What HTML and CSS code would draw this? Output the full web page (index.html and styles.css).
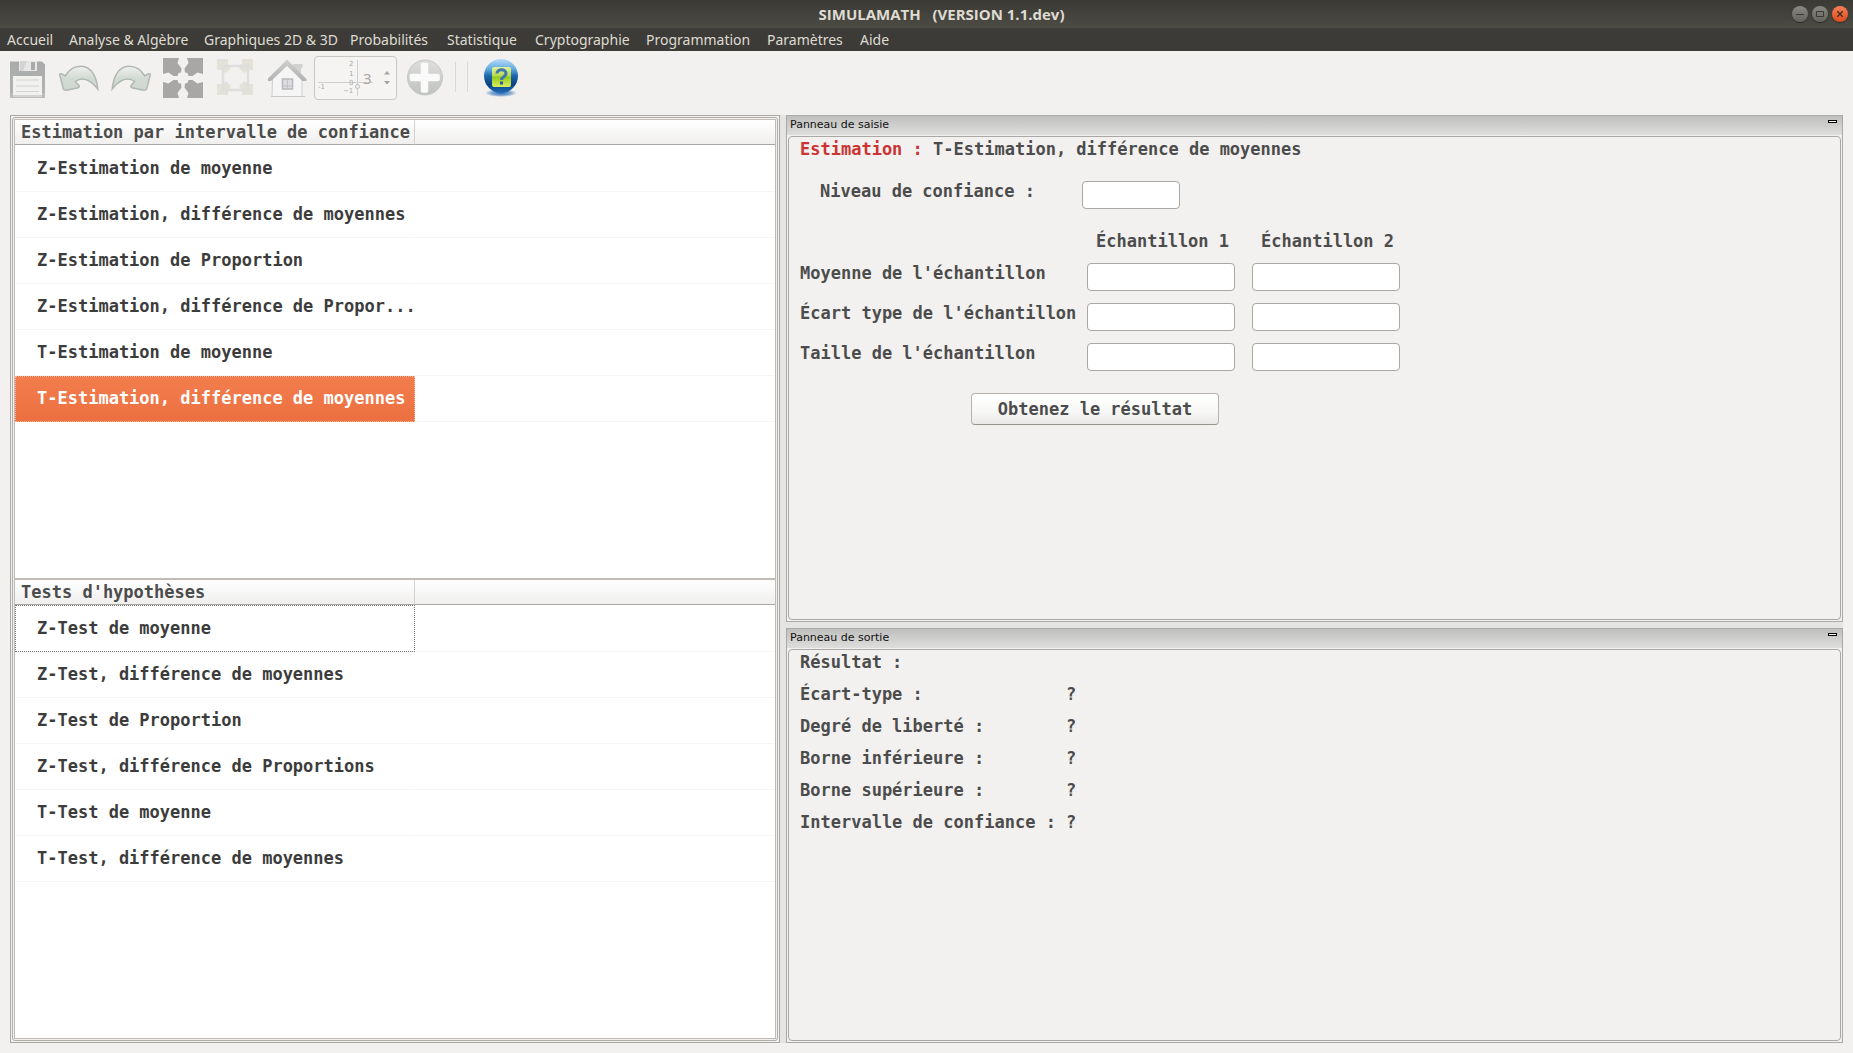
FILE: index.html
```html
<!DOCTYPE html>
<html lang="fr">
<head>
<meta charset="utf-8">
<title>SIMULAMATH (VERSION 1.1.dev)</title>
<link rel="stylesheet" href="styles.css">
</head>
<body>
<header class="titlebar">
  <h1 class="titlebar-text">SIMULAMATH &nbsp; (VERSION 1.1.dev)</h1>
  <div class="window-buttons">
    <button class="wbtn" aria-label="Réduire"><svg viewBox="0 0 16 16"><path d="M4 8.5h8" stroke="#3a3935" fill="none"/></svg></button>
    <button class="wbtn" aria-label="Agrandir"><svg viewBox="0 0 16 16"><path d="M4.5 5.500h7v5h-7z" stroke="#3a3935" fill="none"/></svg></button>
    <button class="wbtn wbtn-close" aria-label="Fermer"><svg viewBox="0 0 16 16"><path d="M5.300 5.300l5.400 5.400M10.700 5.300l-5.400 5.400" stroke="#3a2a20" stroke-width="1.300" fill="none"/></svg></button>
  </div>
</header>
<nav class="menubar">
  <a href="#">Accueil</a>
  <a href="#">Analyse &amp; Algèbre</a>
  <a href="#">Graphiques 2D &amp; 3D</a>
  <a href="#">Probabilités</a>
  <a href="#">Statistique</a>
  <a href="#">Cryptographie</a>
  <a href="#">Programmation</a>
  <a href="#">Paramètres</a>
  <a href="#">Aide</a>
</nav>
<div class="toolbar">
  <svg width="0" height="0" class="defs" aria-hidden="true">
    <defs>
      <linearGradient id="leaf" x1="0" y1="0" x2="0" y2="1"><stop offset="0" stop-color="#f0f1f0"/><stop offset=".5" stop-color="#d3dad3"/><stop offset="1" stop-color="#d0d7d0"/></linearGradient>
      <linearGradient id="steel" x1="0" y1="0" x2="0" y2="1"><stop offset="0" stop-color="#a9abab"/><stop offset="1" stop-color="#b4b4b4"/></linearGradient>
      <linearGradient id="disc" x1="0" y1="0" x2="0" y2="1"><stop offset="0" stop-color="#dededd"/><stop offset="1" stop-color="#bfc2bf"/></linearGradient>
      <linearGradient id="roof" x1="0" y1="0" x2="0" y2="1"><stop offset="0" stop-color="#cfcfcf"/><stop offset="1" stop-color="#b2b2b2"/></linearGradient>
      <linearGradient id="ball" x1="0" y1="0" x2="0" y2="1"><stop offset="0" stop-color="#b9dcf6"/><stop offset=".3" stop-color="#5fa9e0"/><stop offset=".5" stop-color="#1c66ab"/><stop offset=".75" stop-color="#0b4283"/><stop offset="1" stop-color="#1e6cb8"/></linearGradient>
      <linearGradient id="lime" x1="0" y1="0" x2="0" y2="1"><stop offset="0" stop-color="#e3f0a0"/><stop offset=".45" stop-color="#b5da50"/><stop offset=".5" stop-color="#93cb1c"/><stop offset="1" stop-color="#dbec62"/></linearGradient>
      <radialGradient id="glow"><stop offset="0" stop-color="#2d6cb0"/><stop offset=".6" stop-color="#7fa6cf"/><stop offset="1" stop-color="#7fa6cf" stop-opacity="0"/></radialGradient>
      <path id="curl" d="M.8 10l3.400 13.500c.7 1.600 2.500 2.100 4.500 1.400l10.500-2.200c1.200-.6 1.200-1.500.5-2.400l-3.400-3.800c6.500-4.500 14-3 22.500 7.500C37.500 12 32.500 1.500 22.500 1.200 15.500 1 10 4.500 6.200 11L2.500 8.800C1.200 8.600.6 9 .8 10z"/>
      <path id="corner" d="M0 0h16l-1.500 5 4 5.500-.5 4-2.500.5L14.500 18h-4l-5-3.500L0 16z"/>
    </defs>
  </svg>
  <button class="tool" aria-label="Enregistrer"><svg viewBox="-1 -1 40 44">
    <path d="M2 4.500h32l3 3V41H2z" fill="url(#steel)"/>
    <path d="M2 36h35v5H2z" fill="#bbb"/>
    <path d="M11 4h18v10H11z" fill="#e7e7e6"/><path d="M12 4h7l-4 10h-3z" fill="#d4d4d4"/>
    <path d="M23 5h4v8h-4z" fill="#aaa"/><path d="M5 19h29v19H5z" fill="#f1f1f0"/><path d="M5 38h29v2H5z" fill="#d5d2d2"/>
    <path d="M8 23h23M8 29h23M8 34.500h23" stroke="#d3d3d3" fill="none"/>
  </svg></button>
  <button class="tool" aria-label="Annuler"><svg viewBox="0 -9 40 44"><use href="#curl" fill="url(#leaf)" stroke="#b1b7b1" stroke-width="1.500"/></svg></button>
  <button class="tool" aria-label="Rétablir"><svg viewBox="-1 -9 40 44"><use href="#curl" transform="matrix(-1 0 0 1 39 0)" fill="url(#leaf)" stroke="#b1b7b1" stroke-width="1.500"/></svg></button>
  <button class="tool" aria-label="Plein écran"><svg viewBox="0 -2 40 44" fill="#a8a7a5">
    <use href="#corner"/><use href="#corner" transform="matrix(-1 0 0 1 40 0)"/>
    <use href="#corner" transform="matrix(1 0 0 -1 0 40)"/><use href="#corner" transform="matrix(-1 0 0 -1 40 40)"/>
  </svg></button>
  <button class="tool" aria-label="Taille normale"><svg viewBox="-2 -3 40 44">
    <g fill="#e4e1d8"><path d="M0 0h11v5l3 4-5 5-4-3H0zM36 0H25v5l-3 4 5 5 4-3h5zM0 36h11v-5l3-4-5-5-4 3H0zM36 36H25v-5l-3-4 5-5 4 3h5z"/></g>
    <path d="M6 7h25v24H6z" fill="none" stroke="#dededf" stroke-width="2.500"/>
  </svg></button>
  <button class="tool" aria-label="Accueil"><svg viewBox="0 -3 40 44">
    <path d="M26 5h9.500v4H34v10h-6z" fill="#d2d2d1"/>
    <path d="M5.500 19L21 4l14 15v18.500h-30z" fill="#f5f5f5" stroke="#cfcfcf"/>
    <path d="M4 37.500h34" stroke="#cacaca" fill="none"/>
    <path d="M20 .5L39.500 20v2h-4L20 7 4 22H1v-2.500z" fill="url(#roof)"/>
    <path d="M15.500 20h10v10h-10z" fill="#dcdce2" stroke="#b8b8b8" stroke-width="1.500"/><path d="M20.500 20v10M15 27h11" stroke="#c3c3c3" fill="none"/>
  </svg></button>
  <div class="spin">
    <svg class="spin-plot" viewBox="0 0 56 40" aria-hidden="true">
      <path d="M0 24.500h55M39.500 2v36" stroke="#cfcfce" fill="none"/>
      <circle cx="39.500" cy="28.500" r="2" fill="#eee" stroke="#bdbdbd"/>
      <g font-family="DejaVu Sans" font-size="7" font-weight="normal" fill="#aaa"><text x="31" y="8">2</text><text x="31" y="18">1</text><text x="31" y="27">0</text><text x="0" y="31">-1</text><text x="25" y="35">−1</text></g>
    </svg>
    <input class="spin-value" type="text" value="3" aria-label="Graduation">
    <svg class="spin-arrows" viewBox="0 0 8 16" aria-hidden="true"><path d="M1 4.500l3-3.500 3 3.500zM1 11l3 3.500 3-3.500z" fill="#a3a3a1"/></svg>
  </div>
  <button class="tool" aria-label="Ajouter"><svg viewBox="-2 -3 40 44">
    <circle cx="18" cy="18.500" r="17.500" fill="url(#disc)" stroke="#c7c9c7"/>
    <path d="M15.500 5.500h4v11h11.500v4H19.500v11.500h-4V20.500H4.500v-4h11z" fill="#fafafa" stroke="#fafafa" stroke-width="3.500" stroke-linejoin="round"/>
  </svg></button>
  <span class="tool-sep"></span>
  <button class="tool" aria-label="Aide"><svg viewBox="-3 -3 40 44">
    <ellipse cx="17" cy="34" rx="16" ry="4" fill="url(#glow)"/>
    <circle cx="17" cy="17" r="17" fill="url(#ball)"/>
    <rect x="8" y="8" width="19" height="20" rx="2" fill="url(#lime)"/>
    <path d="M13 14.500c0-5 9-5 9 0 0 3.500-4.500 3-4.500 6.500" stroke="#3f78a8" stroke-width="3" fill="none"/><path d="M16 22.500h3v3h-3z" fill="#1f5c9a"/>
  </svg></button>
</div>
<main class="workspace">
  <section class="lists">
    <div class="lists-inner">
      <div class="tree">
        <table>
          <thead><tr><th class="col-name">Estimation par intervalle de confiance</th><th></th></tr></thead>
          <tbody>
            <tr><td>Z-Estimation de moyenne</td><td></td></tr>
            <tr><td>Z-Estimation, différence de moyennes</td><td></td></tr>
            <tr><td>Z-Estimation de Proportion</td><td></td></tr>
            <tr><td>Z-Estimation, différence de Propor...</td><td></td></tr>
            <tr><td>T-Estimation de moyenne</td><td></td></tr>
            <tr><td class="selected">T-Estimation, différence de moyennes</td><td></td></tr>
          </tbody>
        </table>
      </div>
      <div class="tree">
        <table>
          <thead><tr><th class="col-name">Tests d'hypothèses</th><th></th></tr></thead>
          <tbody>
            <tr><td class="focused">Z-Test de moyenne</td><td></td></tr>
            <tr><td>Z-Test, différence de moyennes</td><td></td></tr>
            <tr><td>Z-Test de Proportion</td><td></td></tr>
            <tr><td>Z-Test, différence de Proportions</td><td></td></tr>
            <tr><td>T-Test de moyenne</td><td></td></tr>
            <tr><td>T-Test, différence de moyennes</td><td></td></tr>
          </tbody>
        </table>
      </div>
    </div>
  </section>
  <div class="panels">
    <section class="panel panel-input">
      <header class="panel-head"><h2>Panneau de saisie</h2><button class="collapse" aria-label="Replier"></button></header>
      <form class="panel-body" onsubmit="return false">
        <p class="form-title"><span class="accent">Estimation :</span> T-Estimation, différence de moyennes</p>
        <div class="level">
          <label for="level">Niveau de confiance :</label>
          <input id="level" type="text">
        </div>
        <div class="samples">
          <span></span><span class="col-head">Échantillon 1</span><span class="col-head">Échantillon 2</span>
          <label for="m1">Moyenne de l'échantillon</label><input id="m1" type="text"><input aria-label="Moyenne, échantillon 2" type="text">
          <label for="s1">Écart type de l'échantillon</label><input id="s1" type="text"><input aria-label="Écart type, échantillon 2" type="text">
          <label for="n1">Taille de l'échantillon</label><input id="n1" type="text"><input aria-label="Taille, échantillon 2" type="text">
        </div>
        <button class="submit">Obtenez le résultat</button>
      </form>
    </section>
    <section class="panel panel-output">
      <header class="panel-head"><h2>Panneau de sortie</h2><button class="collapse" aria-label="Replier"></button></header>
      <div class="panel-body">
        <dl class="results">
          <dt>Résultat :</dt><dd></dd>
          <dt>Écart-type :</dt><dd>?</dd>
          <dt>Degré de liberté :</dt><dd>?</dd>
          <dt>Borne inférieure :</dt><dd>?</dd>
          <dt>Borne supérieure :</dt><dd>?</dd>
          <dt>Intervalle de confiance :</dt><dd>?</dd>
        </dl>
      </div>
    </section>
  </div>
</main>
</body>
</html>
```

FILE: styles.css
```css
* { box-sizing: border-box; }

body {
  margin: 0;
  min-height: 100vh;
  display: flex;
  flex-direction: column;
  background: #f2f1ef;
  color: #4c4c4c;
  font: bold 17px/20px "DejaVu Sans Mono", monospace;
}

button, input { font: inherit; color: inherit; margin: 0; padding: 0; }
h1, h2, p, dl, dd { margin: 0; font: inherit; }

/* window title */
.titlebar {
  display: flex;
  align-items: center;
  height: 28px;
  padding: 0 5px 0 91px;
  background: linear-gradient(#3a3934, #4c4b44);
  color: #dfdbd2;
}
.titlebar-text {
  flex: 1;
  text-align: center;
  font: bold 15px/20px "Open Sans", "Noto Sans", sans-serif;
}
.window-buttons { display: flex; gap: 4px; }
.wbtn {
  width: 16px;
  height: 16px;
  border: 0;
  border-radius: 50%;
  background: linear-gradient(#8a8982, #63625b);
  box-shadow: 0 1px 1px #2b2a27;
}
.wbtn svg { display: block; width: 16px; height: 16px; }
.wbtn-close { background: linear-gradient(#f58059, #dd4a1a); }

/* menus */
.menubar {
  display: grid;
  grid-template-columns: 62px 135px 146px 97px 88px 111px 121px 93px auto;
  height: 23px;
  padding-left: 7px;
  background: #3c3b37;
  font: 14px/23px "Noto Sans", sans-serif;
}
.menubar a { color: #dfdbd2; text-decoration: none; white-space: nowrap; }

/* toolbar */
.toolbar {
  display: flex;
  align-items: flex-start;
  gap: 12px;
  height: 64px;
  padding: 5px 7px 0;
}
.defs { position: absolute; }
.tool { width: 40px; height: 44px; border: 0; background: none; }
.tool svg { display: block; width: 40px; height: 44px; }
.spin {
  display: flex;
  align-items: center;
  width: 83px;
  height: 44px;
  margin: 0 -4px 0 -5px;
  padding: 0 8px 0 3px;
  border: 1px solid #c9c7c4;
  border-radius: 4px;
  background: #f5f4f3;
}
.spin-plot { flex: none; width: 56px; height: 40px; margin-right: -11px; }
.spin-value {
  width: 20px;
  border: 0;
  background: none;
  color: #aaa8a5;
  font: 15px/20px "Noto Sans", sans-serif;
}
.spin-arrows { flex: none; width: 8px; height: 16px; }
.tool-sep {
  width: 13px;
  height: 30px;
  margin: 6px 1px 0 -2px;
  border: solid #dad8d5;
  border-width: 0 1px;
}

/* split area */
.workspace {
  flex: 1;
  display: grid;
  grid-template-columns: minmax(0, 770fr) minmax(0, 1057fr);
  gap: 6px;
  margin: 0 10px 10px;
  background: #e4e4e2;
}

.lists {
  display: flex;
  padding: 1px;
  border: 1px solid #aaa8a4;
  background: #f2f1ef;
}
.lists-inner {
  flex: 1;
  display: flex;
  flex-direction: column;
  padding: 1px;
  border: 1px solid #b1aea9;
  border-radius: 3px;
}
.tree {
  flex: 1;
  border: 1px solid #c0bbb5;
  background: #fff;
}
.tree table {
  width: 100%;
  table-layout: fixed;
  border-spacing: 0;
  text-align: left;
  white-space: nowrap;
}
.tree th {
  height: 25px;
  padding: 0 0 0 6px;
  border-bottom: 1px solid #a9a5a0;
  background: linear-gradient(#fff, #f0efee);
}
.tree .col-name { width: 400px; border-right: 1px solid #d4d2cf; }
.tree td {
  height: 46px;
  padding: 0 0 2px 21px;
  border: 1px solid transparent;
  border-bottom-color: #f5f5f5;
  color: #3c3c3c;
}
.tree tbody tr:first-child td { height: 47px; }
.tree td.selected {
  border: 1px dotted #f9b596;
  background: linear-gradient(#f37d4e, #ec7040);
  color: #fff;
}
.tree td.focused { border: 1px dotted #777; }

.panels { display: flex; flex-direction: column; gap: 6px; }
.panel {
  display: flex;
  flex-direction: column;
  padding: 0 1px 1px;
  border: 1px solid #a9a9a7;
  background: #f2f1ef;
}
.panel-input { flex: 507 0 0; }
.panel-output { flex: 415 0 0; }
.panel-head {
  display: flex;
  justify-content: space-between;
  height: 19px;
  margin: 0 -1px 1px;
  padding: 0 5px 0 3px;
  background: linear-gradient(#bfbfbd, #dededc);
  color: #111;
}
.panel-head h2 { font: 11px/17px "DejaVu Sans", sans-serif; }
.collapse {
  width: 9px;
  height: 3px;
  margin-top: 4px;
  border: 1px solid #000;
  background: #fff;
}
.panel-body {
  flex: 1;
  padding: 2px 11px;
  border: 1px solid #aaa8a4;
  border-radius: 4px;
}

.accent { color: #cc3333; }
.level { display: flex; margin-top: 22px; padding-left: 20px; }
.level label { width: 262px; }
.level input { width: 98px; }
.panel-body input {
  height: 28px;
  padding: 0 6px;
  border: 1px solid #aba7a2;
  border-radius: 4px;
  background: #fff;
}
.samples {
  display: grid;
  grid-template-columns: 270px 148px 148px;
  column-gap: 17px;
  row-gap: 12px;
  margin-top: 22px;
  white-space: nowrap;
}
.col-head { padding-left: 9px; }
.submit {
  display: block;
  width: 248px;
  height: 32px;
  margin: 22px 0 0 171px;
  border: 1px solid #b5b2ae;
  border-bottom-color: #98958f;
  border-radius: 4px;
  background: linear-gradient(#fff, #f7f7f6 60%, #e9e8e7);
}

.results {
  display: grid;
  grid-template-columns: 256px 20px;
  column-gap: 10px;
  row-gap: 12px;
}
.results dt { white-space: nowrap; }
```
